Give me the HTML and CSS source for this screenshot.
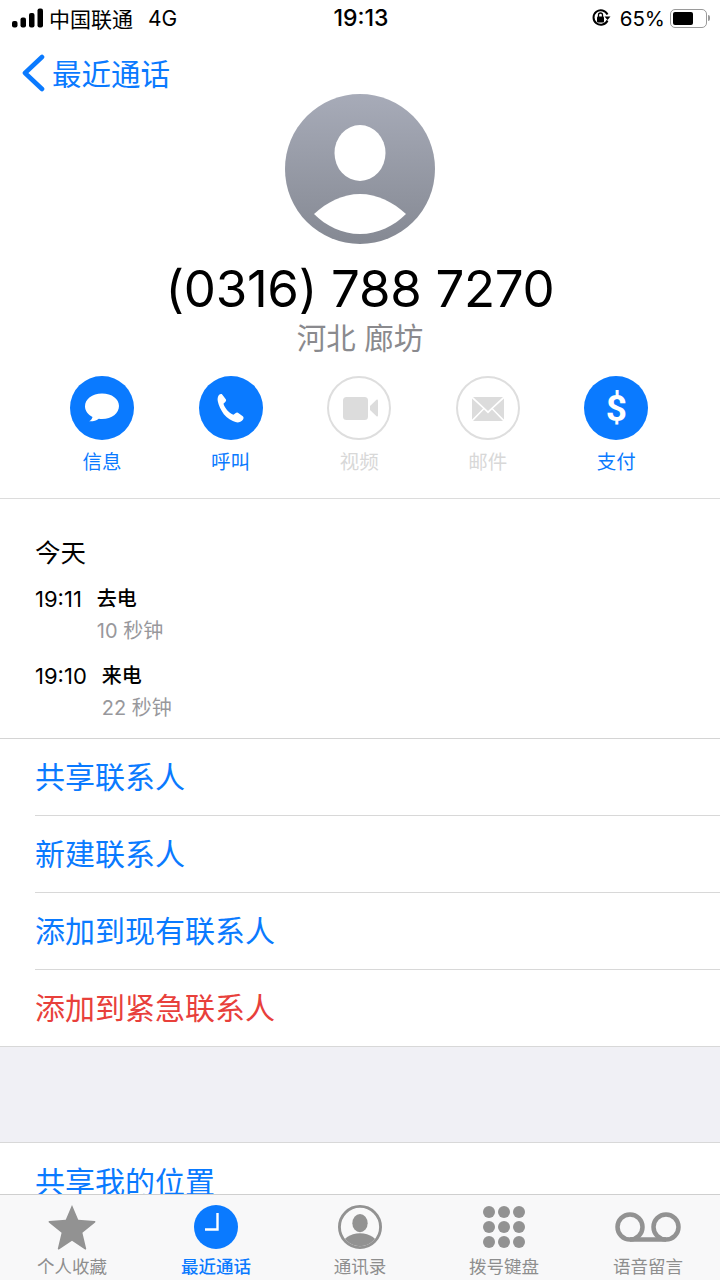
FILE: index.html
```html
<!DOCTYPE html>
<html lang="zh-CN">
<head>
<meta charset="utf-8">
<title>最近通话</title>
<link rel="stylesheet" href="styles.css">
</head>
<body>
<div class="app">
  <main class="scroll">
    <header class="status">
      <div class="status-left">
        <svg class="signal" width="32" height="20" viewBox="0 0 32 20"><rect x="0" y="13" width="5.5" height="6.5" rx="2" fill="#000"/><rect x="8.5" y="9.5" width="5.5" height="10" rx="2" fill="#000"/><rect x="17" y="5" width="5.5" height="14.5" rx="2" fill="#000"/><rect x="25.5" y="0.5" width="5.5" height="19" rx="2" fill="#000"/></svg>
        <span>中国联通</span><span class="net">4G</span>
      </div>
      <div class="status-time">19:13</div>
      <div class="status-right">
        <svg width="20" height="20" viewBox="0 0 20 20"><path d="M16.5 12.5A7.3 7.3 0 1 1 16.5 6.5" fill="none" stroke="#000" stroke-width="2"/><path d="M19.5 8.5h-6l3 3.5z" fill="#000"/><rect x="6" y="8.5" width="7" height="6" rx="1" fill="#000"/><path d="M7.5 9V7a2 2 0 0 1 4 0v2" fill="none" stroke="#000" stroke-width="1.3"/></svg>
        <span class="pct">65%</span>
        <div class="battery"><div class="battery-fill"></div></div>
        <div class="battery-tip"></div>
      </div>
    </header>
    <nav class="nav">
      <svg width="24" height="38" viewBox="0 0 24 38"><path d="M21 3L4 19l17 16" fill="none" stroke="#0a7aff" stroke-width="4.6" stroke-linecap="round" stroke-linejoin="round"/></svg>
      <span class="nav-title">最近通话</span>
    </nav>
    <section class="hero">
      <div class="avatar">
        <svg width="150" height="150" viewBox="0 0 150 150"><defs><linearGradient id="ag" x1="0" y1="0" x2="0" y2="1"><stop offset="0" stop-color="#a7abb8"/><stop offset="1" stop-color="#858993"/></linearGradient></defs><circle cx="75" cy="75" r="75" fill="url(#ag)"/><ellipse cx="75" cy="59" rx="25.5" ry="28" fill="#fff"/><path d="M29 120C42 108 58 100 75 100s33 8 46 20c-12 12-28 20-46 20s-34-8-46-20z" fill="#fff"/></svg>
      </div>
      <h1 class="name">(0316) 788 7270</h1>
      <p class="place">河北 廊坊</p>
    </section>
    <section class="actions">
      <div class="action">
        <div class="circle"><svg width="40" height="40" viewBox="0 0 40 40"><path d="M20 6.500c-10 0-17 5.700-17 12.800 0 4.700 3 8.500 7.500 10.700-.4 2-1.500 3.300-3.300 4.300 3.500.3 6.800-.6 9.600-2.600 1.200.2 2.300.3 3.200.3 10 0 17-6 17-13.000 0-7-7-12.500-17-12.500z" fill="#fff" transform="translate(0 -1)"/></svg></div>
        <span>信息</span>
      </div>
      <div class="action">
        <div class="circle"><svg width="37" height="37" viewBox="0 0 40 40"><path d="M7.500 5.500c1-1 2.600-1.500 3.700-.5l3.500 4.800c.9 1.200.6 2.300-.4 3.300l-1.900 1.800c.8 2.500 2 4.600 4 6.900 2.200 2.500 4.300 4 6.800 5l2.100-1.700c1.200-1 2.400-1 3.500-.1l4.500 3.500c1.200 1 1 2.600-.1 3.900-1.800 2.100-4.500 3.100-7 2.500-5-1.200-9.800-4.500-13.400-8.700C9.700 21.900 7 16.800 6.200 12c-.4-2.600 0-4.900 1.300-6.500z" fill="#fff"/></svg></div>
        <span>呼叫</span>
      </div>
      <div class="action off">
        <div class="circle"><svg width="40" height="40" viewBox="0 0 40 40"><rect x="4" y="9" width="25" height="23" rx="3.5" fill="#dcdcdc"/><path d="M31 18l6.500-6.300c.7-.6 1.500-.2 1.500.7v15.200c0 .9-.8 1.300-1.500.7L31 22z" fill="#dcdcdc"/></svg></div>
        <span>视频</span>
      </div>
      <div class="action off">
        <div class="circle"><svg width="40" height="40" viewBox="0 0 40 40"><g transform="translate(0 1)"><path d="M5 8h30L20 22z" fill="#dcdcdc"/><path d="M4 9.500v21l11-11zM36 9.500v21L25 19.500zM5 32h30L24 20.500 20 24.500l-4-4z" fill="#dcdcdc"/></g></svg></div>
        <span>邮件</span>
      </div>
      <div class="action">
        <div class="circle"><span class="dollar">$</span></div>
        <span>支付</span>
      </div>
    </section>
    <section class="history">
      <h2 class="day">今天</h2>
      <div class="call">
        <span class="call-time">19:11</span>
        <div class="call-info"><div class="call-type">去电</div><div class="call-len">10 秒钟</div></div>
      </div>
      <div class="call">
        <span class="call-time">19:10</span>
        <div class="call-info"><div class="call-type">来电</div><div class="call-len">22 秒钟</div></div>
      </div>
    </section>
    <ul class="list">
      <li>共享联系人</li>
      <li>新建联系人</li>
      <li>添加到现有联系人</li>
      <li class="danger">添加到紧急联系人</li>
    </ul>
    <div class="gap"></div>
    <ul class="list list-second">
      <li>共享我的位置</li>
    </ul>
  </main>
  <footer class="tabs">
    <div class="tab">
      <div class="tab-icon"><svg width="48" height="45" viewBox="0 0 50 47.500"><path d="M25 0l6.600 15.600 17.400 1.300c.8.100 1 1 .4 1.500L36 29.300l4 17c.1.600-.6 1.100-1.200.8L25 37.700 11.200 47c-.6.300-1.300-.2-1.200-.8l4-17L.6 18.400c-.6-.5-.4-1.400.4-1.500l17.400-1.300z" fill="#929292"/></svg></div>
      <span>个人收藏</span>
    </div>
    <div class="tab active">
      <div class="tab-icon"><svg width="44" height="44" viewBox="0 0 44 44"><circle cx="22" cy="22" r="22" fill="#0a7aff"/><path d="M23.500 8v16.500h-12.500" fill="none" stroke="#fff" stroke-width="2.400"/></svg></div>
      <span>最近通话</span>
    </div>
    <div class="tab">
      <div class="tab-icon"><svg width="44" height="44" viewBox="0 0 46 46"><defs><clipPath id="cc"><circle cx="23" cy="23" r="20"/></clipPath></defs><circle cx="23" cy="23" r="21.500" fill="none" stroke="#929292" stroke-width="3"/><ellipse cx="23" cy="19" rx="8" ry="9.500" fill="#929292"/><ellipse cx="23" cy="43" rx="19" ry="13.500" fill="#929292" clip-path="url(#cc)"/></svg></div>
      <span>通讯录</span>
    </div>
    <div class="tab">
      <div class="tab-icon"><svg width="44" height="44" viewBox="0 0 44 44" fill="#929292"><circle cx="7" cy="7" r="6"/><circle cx="22" cy="7" r="6"/><circle cx="37" cy="7" r="6"/><circle cx="7" cy="22" r="6"/><circle cx="22" cy="22" r="6"/><circle cx="37" cy="22" r="6"/><circle cx="7" cy="37" r="6"/><circle cx="22" cy="37" r="6"/><circle cx="37" cy="37" r="6"/></svg></div>
      <span>拨号键盘</span>
    </div>
    <div class="tab">
      <div class="tab-icon"><svg width="66" height="46" viewBox="0 0 66 46"><circle cx="15" cy="23" r="12.500" fill="none" stroke="#929292" stroke-width="4.500"/><circle cx="51" cy="23" r="12.500" fill="none" stroke="#929292" stroke-width="4.500"/><path d="M15 35.500h36" stroke="#929292" stroke-width="4.500"/></svg></div>
      <span>语音留言</span>
    </div>
  </footer>
</div>
</body>
</html>
```
FILE: styles.css
```css
* { box-sizing: border-box; }
html, body { margin: 0; padding: 0; }
body {
  width: 720px;
  height: 1280px;
  overflow: hidden;
  background: #fff;
  font-family: Inter, "Noto Sans CJK SC", sans-serif;
  color: #000;
}
.app { display: flex; flex-direction: column; height: 1280px; }
.scroll { height: 1194px; flex: none; overflow: hidden; }

.status {
  height: 36px;
  display: grid;
  grid-template-columns: 1fr auto 1fr;
  align-items: center;
  padding: 0 10px 0 12px;
  font-size: 21px;
}
.status-left { display: flex; align-items: center; gap: 5px; }
.net { margin-left: 10px; }
.status-time { font-weight: 500; font-size: 23px; }
.status-right { display: flex; align-items: center; justify-content: flex-end; gap: 0; }
.pct { margin-left: 9px; font-size: 20.500px; margin-right: 5px; }
.battery {
  width: 37px; height: 19px;
  border: 1.500px solid #9a9a9a;
  border-radius: 5px;
  padding: 2px;
}
.battery-fill { width: 65%; height: 100%; background: #000; border-radius: 2px; }
.battery-tip { width: 2px; height: 6px; margin-left: 1px; background: #9a9a9a; border-radius: 0 2px 2px 0; }

.nav {
  height: 58px;
  display: flex;
  align-items: center;
  padding: 16px 0 0 21px;
  gap: 7px;
  color: #0a7aff;
}
.nav-title { font-size: 29.500px; margin-top: -3px; }

.hero { display: flex; flex-direction: column; align-items: center; }
.avatar { height: 150px; }
.avatar svg { display: block; }
.name {
  margin: 12px 0 0;
  font-size: 51px;
  font-weight: 400;
  line-height: 66px;
  letter-spacing: -0.300px;
}
.place {
  margin: -4px 0 2px;
  font-size: 29.500px;
  line-height: 40px;
  color: #8a8a8e;
}

.actions {
  margin-top: 16px;
  height: 123px;
  padding: 0 0 0 37.700px;
  display: grid;
  grid-template-columns: repeat(5, 128.600px);
  justify-items: center;
  align-content: start;
  border-bottom: 1.500px solid #dcdcdc;
}
.action {
  display: flex;
  flex-direction: column;
  align-items: center;
  gap: 7px;
  font-size: 19.500px;
  line-height: 30px;
  color: #0a7aff;
}
.circle {
  width: 64px; height: 64px;
  border-radius: 50%;
  background: #0a7aff;
  display: flex;
  align-items: center;
  justify-content: center;
}
.action.off { color: #d8d8d8; }
.action.off .circle { background: #fff; border: 2px solid #dedede; }
.dollar { color: #fff; font-family: Roboto, sans-serif; font-size: 37px; font-weight: 700; line-height: 1; }

.history {
  padding: 35px 0 0 35px;
  height: 240px;
  border-bottom: 1.500px solid #d4d4d4;
}
.day { margin: 0; font-size: 25.500px; font-weight: 400; line-height: 38px; }
.call { display: flex; gap: 15px; margin-top: 12px; font-size: 20px; }
.call + .call { margin-top: 14px; }
.call-time { line-height: 30px; font-size: 22px; }
.call-type { line-height: 30px; font-weight: 500; }
.call-len { line-height: 32px; margin-top: 1px; color: #98989c; }

.list {
  list-style: none;
  margin: 0;
  padding: 0 0 0 35px;
  color: #0a7aff;
  font-size: 30px;
}
.list li {
  height: 77px;
  display: flex;
  align-items: center;
  padding-bottom: 4px;
  border-bottom: 1px solid #d8d8d8;
}
.list li:last-child { border-bottom: none; height: 76px; }
.list-second li { padding-bottom: 2px; }
.list li.danger { color: #e8403b; }
.gap {
  height: 97px;
  background: #f0f0f5;
  border-top: 1px solid #d8d8d8;
  border-bottom: 1px solid #d8d8d8;
}

.tabs {
  flex: none;
  height: 86px;
  background: #f8f8f9;
  border-top: 1.500px solid #cfcfcf;
  display: grid;
  grid-template-columns: repeat(5, 1fr);
  padding: 8px 0 0;
}
.tab {
  display: flex;
  flex-direction: column;
  align-items: center;
  font-size: 17.500px;
  color: #8e8e8e;
  height: 76px;
  justify-content: space-between;
}
.tab-icon { height: 48px; display: flex; align-items: center; }
.tab-icon svg { display: block; }
.tab span { line-height: 24px; }
.tab.active { color: #0a7aff; font-weight: 500; }
```
